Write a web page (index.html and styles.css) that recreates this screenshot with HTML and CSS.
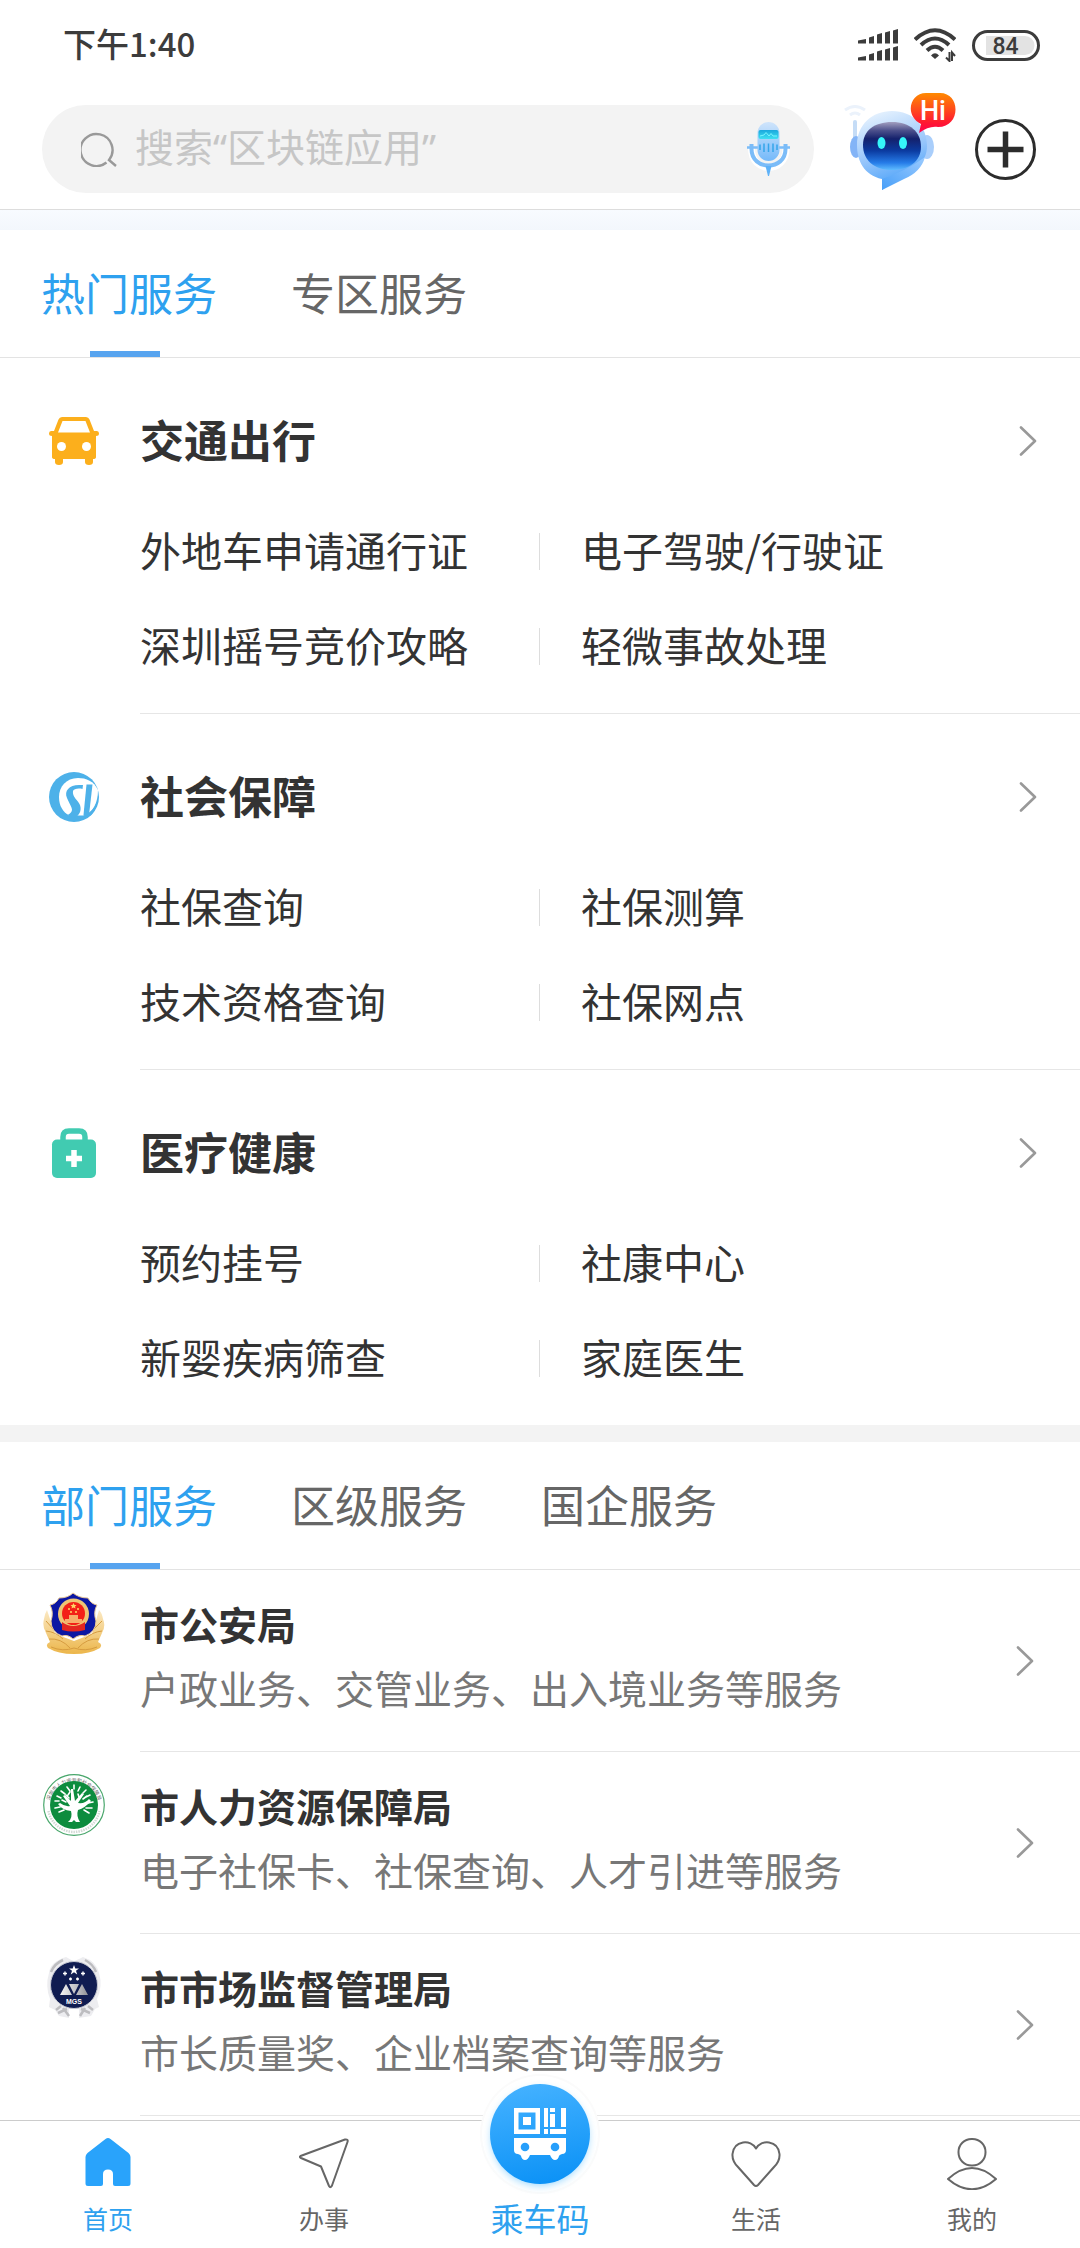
FILE: index.html
```html
<!DOCTYPE html>
<html lang="zh-CN">
<head>
<meta charset="utf-8">
<meta name="viewport" content="width=device-width, initial-scale=1">
<title>首页</title>
<link rel="stylesheet" href="styles.css">
</head>
<body>
<svg class="defs" width="0" height="0" aria-hidden="true">
  <symbol id="chevron" viewBox="0 0 18 30"><path d="M2 1.500L16 15L2 28.500" fill="none" stroke="#999" stroke-width="2.600" stroke-linecap="round" stroke-linejoin="round"/></symbol>
</svg>

<div class="status">
  <span class="status-time">下午1:40</span>
  <div class="status-icons">
    <svg width="40" height="32" viewBox="0 0 40 32" fill="#3c3c3c">
      <path d="M0 11.500L8 10V14.500H0ZM11 8.500L16 7V14.500H11ZM19 5.500L24 4V14.500H19ZM27 3.500L32 2V14.500H27ZM35 1.500L40 0V14.500H35ZM0 28.500L8 27V31.500H0ZM11 25.500L16 24V31.500H11ZM19 22.500L24 21V31.500H19ZM27 20.500L32 19V31.500H27ZM35 18.500L40 17V31.500H35Z"/>
    </svg>
    <svg width="42" height="34" viewBox="0 0 42 34" fill="none" stroke="#3c3c3c" stroke-width="4">
      <path d="M1 11.500Q21 -7 41 11.500"/><path d="M7 17Q21 4 35 17"/><path d="M13 22.500Q21 15 29 22.500"/>
      <path d="M17 27.500Q21 23 25 27.500L21 31Z" fill="#3c3c3c" stroke="none"/>
      <path d="M35.500 24V33L32 29.500M38 33V24.500L41 28" stroke-width="2"/>
    </svg>
    <svg width="68" height="31" viewBox="0 0 68 31">
      <rect x="1.500" y="1.500" width="65" height="28" rx="14" fill="#fff" stroke="#3c3c3c" stroke-width="3"/>
      <path d="M14 6H53A9.500 9.500 0 0 1 53 25H14Z" fill="#e3e3e3"/>
      <text x="33.500" y="24" text-anchor="middle" class="battery-text">84</text>
    </svg>
  </div>
</div>

<header class="header">
  <label class="search">
    <svg width="36" height="36" viewBox="0 0 36 36" fill="none" stroke="#999" stroke-width="2.400"><path d="M25.500 31.500A16 16 0 1 1 28 29L35 35"/></svg>
    <input class="search-input" type="search" placeholder="搜索“区块链应用”" aria-label="搜索">
    <svg width="44" height="54" viewBox="0 0 44 54">
      <defs>
        <linearGradient id="mic" x1="0" y1="0" x2="0" y2="1"><stop offset="0" stop-color="#cfe4fb"/><stop offset="1" stop-color="#74b9fa"/></linearGradient>
        <linearGradient id="screen" x1="0" y1="0" x2="0" y2="1"><stop offset="0" stop-color="#1aa7dd"/><stop offset="1" stop-color="#3fe0f2"/></linearGradient>
      </defs>
      <path d="M4.500 26C4 52 39.500 52 39 26" fill="none" stroke="#fff" stroke-width="7"/>
      <path d="M4.500 22V27C4.500 49 38.500 49 38.500 27V22" fill="none" stroke="#7bbcf8" stroke-width="4"/>
      <path d="M0 25.500H11M32 25.500H43" stroke="#7bbcf8" stroke-width="2.400"/>
      <path d="M18.500 44H24.500L22 54H21Z" fill="#5fb2f8"/>
      <rect x="10.500" y="0" width="22" height="39" rx="11" fill="url(#mic)"/>
      <rect x="11.500" y="8" width="20" height="9" rx="2" fill="url(#screen)"/>
      <path d="M13 14L17 13L19 10.500L22 14L24 11.500L26 14H30" fill="none" stroke="#79f4ff"/>
      <path d="M13 22.500V28M17 21.500V30M21.500 21.500V30M26 21.500V30M30 22.500V28" stroke="#35a5ea" stroke-width="1.500"/>
    </svg>
  </label>
  <button class="icon-button robot" type="button" aria-label="智能助手">
    <svg width="112" height="112" viewBox="0 0 112 112">
      <defs>
        <linearGradient id="head" x1="0.300" y1="0" x2="0.600" y2="1"><stop offset="0" stop-color="#e6f2fe"/><stop offset="0.550" stop-color="#94c4fb"/><stop offset="1" stop-color="#409df9"/></linearGradient>
        <linearGradient id="tail" x1="0" y1="1" x2="1" y2="0"><stop offset="0" stop-color="#489ff8"/><stop offset="1" stop-color="#9bcbff"/></linearGradient>
        <linearGradient id="face" x1="0" y1="0" x2="0" y2="1"><stop offset="0" stop-color="#a29fc0"/><stop offset="0.180" stop-color="#4b4f8b"/><stop offset="0.350" stop-color="#14216c"/><stop offset="0.600" stop-color="#0b3ba1"/><stop offset="0.850" stop-color="#267ce8"/><stop offset="1" stop-color="#5fbcff"/></linearGradient>
        <linearGradient id="bubble" x1="0" y1="0" x2="0" y2="1"><stop offset="0" stop-color="#ff8a00"/><stop offset="0.750" stop-color="#ff1732"/><stop offset="1" stop-color="#ff0050"/></linearGradient>
      </defs>
      <path d="M1 17Q11 10 21 17M6 22Q11 18 16 22" fill="none" stroke="#ebf2fb" stroke-width="3"/>
      <rect x="9" y="27" width="4" height="32" rx="2" fill="#c5dcf6"/>
      <ellipse cx="12" cy="54" rx="6" ry="11" fill="#83b4f7"/>
      <ellipse cx="83" cy="54" rx="7" ry="12" fill="#a9cefb"/>
      <path d="M48 18C69 18 83 33 83 53C83 70 69 78 57 83L38 97V86C20 82 13 68 13 52C13 32 28 18 48 18Z" fill="url(#head)"/>
      <path d="M38 86Q62 78 81 64Q77 79 60 86L38 97Z" fill="url(#tail)"/>
      <path d="M48 29C66 29 77 39 77 54C77 68 65 77 48 77C30 77 19 67 19 52C19 38 30 29 48 29Z" fill="url(#face)"/>
      <ellipse cx="37.500" cy="50" rx="4" ry="6" fill="#35f6fa"/><ellipse cx="59" cy="50" rx="4" ry="6" fill="#35f6fa"/>
      <path d="M82 0H96C117 0 117 34 94 34C88 33 82 35 75 40L77 31C60 22 66 0 82 0Z" fill="url(#bubble)"/>
      <text x="89" y="27" text-anchor="middle" class="hi-text">Hi</text>
    </svg>
  </button>
  <button class="icon-button" type="button" aria-label="添加">
    <svg width="61" height="61" viewBox="0 0 61 61" fill="none" stroke="#2c2c2c"><circle cx="30.500" cy="30.500" r="29" stroke-width="3"/><path d="M12.500 30.500H48.500M30.500 12.500V48.500" stroke-width="5.500"/></svg>
  </button>
</header>
<div class="strip"></div>

<main>
  <nav class="tabs" aria-label="服务分类">
    <button class="tab active" type="button">热门服务</button>
    <button class="tab" type="button">专区服务</button>
  </nav>

  <section class="group">
    <a class="group-head" href="#traffic">
      <svg class="group-icon" width="50" height="50" viewBox="0 0 50 50">
        <path d="M13 1H37Q39.500 1 40.500 3.500L45 15H48Q50 15 50 17.500Q50 20 47 20V41Q47 43 44 43V46Q44 49 40 49Q36 49 36 46V43H14V46Q14 49 10 49Q6 49 6 46V43Q3 43 3 41V20Q0 20 0 17.500Q0 15 2 15H5L9.500 3.500Q10.500 1 13 1ZM13.500 5L9 16.500H41L36.500 5Z" fill="#fcaf1c" fill-rule="evenodd"/>
        <circle cx="12.500" cy="30.500" r="4.500" fill="#fff"/><circle cx="37.500" cy="30.500" r="4.500" fill="#fff"/>
      </svg>
      <h2 class="group-title">交通出行</h2>
      <svg class="chevron" width="18" height="30"><use href="#chevron"/></svg>
    </a>
    <div class="links">
      <a href="#1">外地车申请通行证</a><a href="#2">电子驾驶/行驶证</a>
      <a href="#3">深圳摇号竞价攻略</a><a href="#4">轻微事故处理</a>
    </div>
  </section>

  <section class="group">
    <a class="group-head" href="#social">
      <svg class="group-icon" width="50" height="50" viewBox="0 0 50 50">
        <circle cx="25" cy="25" r="25" fill="#4db1e9"/>
        <path d="M49 18C45 9 37 6 29 6C17 6 10 15 10 25C10 34 14 40 20 43.500H34C44 41 49 31 49 18Z" fill="#fff"/>
        <path d="M34 13H30C20 13 15 19 18 26C20 31 23 35 23 38C22.500 40.500 21 42 18 43L25 46C30 44 33 39 31 33C29 28 23 25 24 19C24.500 17 29 16 33.500 17Z" fill="#4db1e9"/>
        <path d="M37.500 12.500H43.500L40 43H34.500Z" fill="#4db1e9"/>
        <path d="M49.500 24Q47 36 40 41L41 44Q48 38 49.500 24Z" fill="#4db1e9"/>
      </svg>
      <h2 class="group-title">社会保障</h2>
      <svg class="chevron" width="18" height="30"><use href="#chevron"/></svg>
    </a>
    <div class="links">
      <a href="#5">社保查询</a><a href="#6">社保测算</a>
      <a href="#7">技术资格查询</a><a href="#8">社保网点</a>
    </div>
  </section>

  <section class="group">
    <a class="group-head" href="#health">
      <svg class="group-icon" width="50" height="50" viewBox="0 0 50 50">
        <path d="M14 14V9Q14 3 20 3H30Q36 3 36 9V14" fill="none" stroke="#41cbb1" stroke-width="5.500"/>
        <rect x="3" y="11.500" width="44" height="38.500" rx="5" fill="#41cbb1"/>
        <path d="M17 30.500H33M25 22V39" stroke="#fff" stroke-width="5.500"/>
      </svg>
      <h2 class="group-title">医疗健康</h2>
      <svg class="chevron" width="18" height="30"><use href="#chevron"/></svg>
    </a>
    <div class="links">
      <a href="#9">预约挂号</a><a href="#10">社康中心</a>
      <a href="#11">新婴疾病筛查</a><a href="#12">家庭医生</a>
    </div>
  </section>

  <div class="spacer"></div>

  <nav class="tabs" aria-label="机构分类">
    <button class="tab active" type="button">部门服务</button>
    <button class="tab" type="button">区级服务</button>
    <button class="tab" type="button">国企服务</button>
  </nav>

  <div class="departments">
    <a class="department" href="#police">
      <svg class="badge" width="62" height="62" viewBox="0 0 62 62">
        <defs><linearGradient id="gold" x1="0" y1="0" x2="0" y2="1"><stop offset="0" stop-color="#fbe9c4"/><stop offset="1" stop-color="#ecb64a"/></linearGradient></defs>
        <path d="M4 18Q2 21 1 27Q-1 34 3 41L7 50Q2 52 5 56Q15 62 31 62Q47 62 57 56Q60 52 55 50L59 41Q63 34 60 27Q59 21 56 18L49 42L31 49L12 42Z" fill="url(#gold)"/>
        <path d="M6 47Q18 46 27 56M56 47Q44 46 35 56M3 39Q13 40 20 47M59 39Q49 40 42 47M3 29L12 39M59 29L49 39M8 55Q20 60 31 56Q42 60 54 55" fill="none" stroke="#d69c40" stroke-width="1"/>
        <path d="M30 1Q36 6 45 6Q48 12 54 13Q50 20 53 29Q53 40 42 44Q36 42 30 47Q25 42 19 44Q8 40 8 29Q11 20 7 13Q13 12 16 6Q25 6 30 1Z" fill="#0c17a3" stroke="#e9c794"/>
        <circle cx="30.500" cy="22" r="15.500" fill="#efc574"/><circle cx="30.500" cy="21.500" r="11.500" fill="#f32018"/>
        <path d="M22 27H39V31H22ZM26 23H35V27H26Z" fill="#f7ae6b"/>
        <path d="M19 30Q30 38 42 30V38Q30 41 19 38Z" fill="#e32621"/>
        <path d="M30.500 11l1 2h2l-1.500 1.500 .5 2-2-1-2 1 .5-2-1.500-1.500h2Z" fill="#ffd566"/><path d="M25 17h2M34 17h2M27 20h2M32 20h2" stroke="#ffd566" stroke-width="1.500"/>
      </svg>
      <div class="department-text"><h3 class="department-name">市公安局</h3><p class="department-desc">户政业务、交管业务、出入境业务等服务</p></div>
      <svg class="chevron" width="18" height="30"><use href="#chevron"/></svg>
    </a>
    <a class="department" href="#hr">
      <svg class="badge" width="62" height="62" viewBox="0 0 62 62">
        <circle cx="31" cy="31" r="30.300" fill="#fff" stroke="#49a76c" stroke-width="1.200"/>
        <path id="ring" d="M6 33A25 25 0 1 1 56 33" fill="none"/>
        <path d="M5.500 37A26 26 0 0 0 56.500 37" fill="none" stroke="#d2dad5" stroke-width="2.500" stroke-dasharray="1.500 1"/>
        <text class="ring-text"><textPath href="#ring" startOffset="50%" text-anchor="middle">深圳市人力资源和社会保障局</textPath></text>
        <circle cx="31" cy="31" r="24" fill="#0d8c3e"/>
        <path d="M25 48Q30 44 28 37Q19 36 15 30L17 29Q22 33 27 32L20 22L22 21L28 27L28 15H30L32 27L39 19L41 20L35 29Q42 30 46 25L48 27Q42 34 35 36Q33 42 37 48H33L31 46L29 48Z" fill="#fff"/>
        <path d="M12 27h4M14 22l4 2M18 17l4 3M24 13l3 4M31 11v4M37 13l-2 4M43 16l-3 3M47 21l-4 2M50 28l-5 1M12 34l5-1M49 34l-6 0M23 21l3 3M35 20l1 3M40 25l4-3M19 26l4 2M16 38l5-2M46 39l-5-3M27 18l-2 3" stroke="#fff" stroke-width="1.600" stroke-linecap="round"/>
      </svg>
      <div class="department-text"><h3 class="department-name">市人力资源保障局</h3><p class="department-desc">电子社保卡、社保查询、人才引进等服务</p></div>
      <svg class="chevron" width="18" height="30"><use href="#chevron"/></svg>
    </a>
    <a class="department" href="#market">
      <svg class="badge" width="62" height="62" viewBox="0 0 62 62">
        <defs><linearGradient id="silver" x1="0" y1="0" x2="1" y2="0"><stop offset="0" stop-color="#f4f4f4"/><stop offset="0.700" stop-color="#b6b6bb"/><stop offset="1" stop-color="#909095"/></linearGradient></defs>
        <path d="M23 1Q7 6 6 17Q2 30 7 43L6 51L12 54L16 60L26 62V53L36 53V62L48 60L52 53L56 51L54 43Q60 30 56 17Q53 5 40 1Q34 4 31 5Q28 4 23 1Z" fill="#ededf0"/>
        <path d="M8 16Q11 8 20 4M53 16Q50 8 42 4M15 57L24 53M47 57L38 53M18 50L13 54M45 50L50 54M37 60L42 52M26 60L20 52" fill="none" stroke="#bdbdc0" stroke-width="2.500"/>
        <circle cx="31" cy="29" r="23.500" fill="#101c51" stroke="#c6c8d1" stroke-width="1"/>
        <path d="M31 9l1.300 3.500h3.700l-3 2.300 1.200 3.700-3.200-2.200-3.200 2.200 1.200-3.700-3-2.300h3.700Z" fill="#fff"/>
        <path d="M22 15.500v4M20 17.500h4M40 15.500v4M38 17.500h4M27.500 21.500v3M26 23h3M34.500 21.500v3M33 23h3" stroke="#fff" stroke-width="1.400"/>
        <path d="M17 39L23 28L29 39ZM33 39L39 28L45 39ZM26 28H36L31 38Z" fill="url(#silver)"/>
        <text x="31" y="47.500" text-anchor="middle" class="badge-text">MGS</text>
      </svg>
      <div class="department-text"><h3 class="department-name">市市场监督管理局</h3><p class="department-desc">市长质量奖、企业档案查询等服务</p></div>
      <svg class="chevron" width="18" height="30"><use href="#chevron"/></svg>
    </a>
  </div>
</main>

<nav class="bottom-nav" aria-label="主导航">
  <a class="nav-item active" href="#home">
    <svg width="50" height="52" viewBox="0 0 50 52"><path d="M22.500 1Q25 -1 27.500 1L45.500 15Q47.500 17 47.500 19V45.500Q47.500 48 45 48H32Q30 48 30 46V36Q30 31.500 25 31.500Q20 31.500 20 36V46Q20 48 18 48H5Q2.500 48 2.500 45.500V19Q2.500 17 4.500 15Z" fill="#29a3fb"/></svg>
    <span>首页</span>
  </a>
  <a class="nav-item" href="#work">
    <svg width="50" height="52" viewBox="0 0 50 52"><path d="M1.500 18L46 1.500Q49.500 1 48.500 4L33 47.500Q31.500 50.500 30 48L22 28.500L2 20Q0 19 1.500 18Z" fill="none" stroke="#666" stroke-width="2" stroke-linejoin="round"/></svg>
    <span>办事</span>
  </a>
  <a class="nav-item ride" href="#ride">
    <svg width="120" height="120" viewBox="0 0 120 120">
      <defs>
        <linearGradient id="ride" x1="0.400" y1="0" x2="0.600" y2="1"><stop offset="0" stop-color="#43b1ff"/><stop offset="1" stop-color="#0c92f6"/></linearGradient>
        <filter id="glow" x="-20%" y="-20%" width="140%" height="140%"><feGaussianBlur stdDeviation="4"/></filter>
      </defs>
      <circle cx="60" cy="60" r="60" fill="#fbfbfb"/><circle cx="60" cy="60" r="58" fill="#fff"/>
      <circle cx="60" cy="63" r="48" fill="#8ed3ff" filter="url(#glow)"/>
      <circle cx="60" cy="60" r="50" fill="url(#ride)"/>
      <path d="M34 34H60V60H34ZM38.500 38.500V55.500H55.500V38.500ZM43 43H51V51H43ZM64 34H68V53H64ZM70 34H75V38H70ZM70 40H75V53H70ZM81 34H86V53H81ZM64 55H68V60H64ZM70 55H86V60H70Z" fill="#fff" fill-rule="evenodd"/>
      <path d="M34 64H86V76Q86 80 82 80Q79 81 79 82Q78 86 75 86Q72 86 70 81H50Q48 86 45 86Q42 86 41 82Q41 81 38 80Q34 80 34 76Z" fill="#fff"/>
      <circle cx="45" cy="73" r="4.300" fill="#279ffb"/><circle cx="75" cy="73" r="4.300" fill="#279ffb"/>
    </svg>
    <span>乘车码</span>
  </a>
  <a class="nav-item" href="#life">
    <svg width="50" height="52" viewBox="0 0 50 52"><path d="M25 10.500C30 1 47 2 48.500 16C49 22 46 26 43 29L27 47Q25 49 23 47L7 29C4 26 1 22 1.500 16C3 2 20 1 25 10.500Z" fill="none" stroke="#666" stroke-width="2" stroke-linejoin="round"/></svg>
    <span>生活</span>
  </a>
  <a class="nav-item" href="#me">
    <svg width="50" height="52" viewBox="0 0 50 52" fill="none" stroke="#666" stroke-width="2"><rect x="11.500" y="1" width="27" height="26.500" rx="13"/><path d="M1 41Q25 19 49 41Q25 61.500 1 41Z" stroke-linejoin="round"/></svg>
    <span>我的</span>
  </a>
</nav>
</body>
</html>
```

FILE: styles.css
```css
* {
  box-sizing: border-box;
}

body {
  margin: 0;
  min-height: 100vh;
  display: flex;
  flex-direction: column;
  background: #fff;
  color: #333;
  font-family: "Noto Sans CJK SC", "Noto Sans", sans-serif;
}

a {
  color: inherit;
  text-decoration: none;
}

h2,
h3,
p {
  margin: 0;
}

svg {
  display: block;
  flex: none;
}

.defs {
  display: none;
}

/* Status bar */
.status {
  display: flex;
  align-items: center;
  justify-content: space-between;
  height: 90px;
  padding: 0 40px 0 63px;
}

.status-time {
  padding-bottom: 4px;
  font-size: 33px;
  font-weight: 500;
  line-height: 48px;
  color: #3c3c3c;
}

.status-icons {
  display: flex;
  align-items: center;
  gap: 16px;
}

.battery-text {
  font: 500 23px Roboto, sans-serif;
  fill: #3c3c3c;
}

/* Header */
.header {
  display: flex;
  align-items: center;
  padding: 3px 44px 4px 42px;
  border-bottom: 1px solid #ddd;
}

.search {
  flex: 1;
  display: flex;
  align-items: center;
  height: 88px;
  padding: 0 23px 0 39px;
  border-radius: 44px;
  background: #f3f3f3;
}

.search-input {
  flex: 1;
  min-width: 0;
  margin: 0;
  padding: 0 18px 4px;
  border: 0;
  outline: 0;
  background: transparent;
  font: 400 39px/56px "Noto Sans", "Noto Sans CJK SC", sans-serif;
  color: #333;
}

.search-input::placeholder {
  color: #c6c6c6;
  opacity: 1;
}

.icon-button {
  padding: 0;
  border: 0;
  background: none;
}

.robot {
  margin: 0 19px 0 30px;
}

.hi-text {
  font: 500 27px Roboto, sans-serif;
  fill: #fff;
}

.strip {
  height: 20px;
  background: linear-gradient(#f8fbff, #f3f7fc);
}

/* Tabs */
.tabs {
  display: flex;
  border-bottom: 1px solid #e3e3e3;
}

.tab {
  display: flex;
  flex-direction: column;
  align-items: center;
  height: 127px;
  min-width: 250px;
  padding: 30px 33px 0 41px;
  border: 0;
  background: none;
  color: #666;
  font: 400 44px/64px "Noto Sans CJK SC", sans-serif;
  white-space: nowrap;
}

.tab.active {
  color: #2ea1ef;
  background: linear-gradient(#57a4ef, #57a4ef) 50% 100% / 70px 6px no-repeat;
}

/* Service groups */
.group {
  padding-bottom: 19px;
}

.group + .group {
  background: linear-gradient(#e6e6e6, #e6e6e6) 140px 0 / 100% 1px no-repeat;
  padding-top: 1px;
}

.group-head {
  display: flex;
  align-items: center;
  padding: 50px 43px 30px 49px;
}

.group-icon {
  margin-right: 41px;
}

.group-title {
  flex: 1;
  padding-bottom: 4px;
  font-size: 44px;
  font-weight: 700;
  line-height: 62px;
}

.links {
  display: grid;
  grid-template-columns: 1fr 1fr;
}

.links a {
  margin-left: -1px;
  padding: 0 0 4px 42px;
  font-size: 41px;
  line-height: 91px;
  white-space: nowrap;
  background: linear-gradient(#ddd, #ddd) 0 50% / 1px 37px no-repeat;
}

.links a:nth-child(odd) {
  margin-left: 0;
  padding-left: 140px;
  background: none;
}

.spacer {
  height: 17px;
  background: #f3f3f3;
}

/* Departments */
.department {
  display: flex;
  align-items: center;
  height: 182px;
  padding: 0 46px 0 43px;
  background: linear-gradient(#e6e6e6, #e6e6e6) 140px 100% / 100% 1px no-repeat;
}

.badge {
  align-self: flex-start;
  margin: 22px 35px 0 0;
}

.department-text {
  flex: 1;
  display: flex;
  flex-direction: column;
  gap: 8px;
  padding-bottom: 12px;
  font-size: 39px;
  line-height: 56px;
}

.department-name {
  font-size: 39px;
  font-weight: 700;
}

.department-desc {
  color: #777;
}

/* Bottom navigation */
.bottom-nav {
  position: sticky;
  bottom: 0;
  display: grid;
  grid-template-columns: repeat(5, 1fr);
  align-items: end;
  height: 128px;
  margin-top: auto;
  padding-bottom: 12px;
  border-top: 1px solid #ccc;
  background: #fff;
}

.nav-item {
  display: flex;
  flex-direction: column;
  align-items: center;
  gap: 10px;
  color: #666;
  font-size: 25px;
  line-height: 36px;
}

.nav-item.active {
  color: #2ea1ef;
}

.nav-item.ride {
  gap: 6px;
  margin-top: -47px;
  color: #2ea1ef;
  font-size: 33px;
}

.ring-text {
  font: 5px "Noto Sans CJK SC", sans-serif;
  fill: #666;
}

.badge-text {
  font: 700 7px "Liberation Sans", sans-serif;
  fill: #fff;
}
```
